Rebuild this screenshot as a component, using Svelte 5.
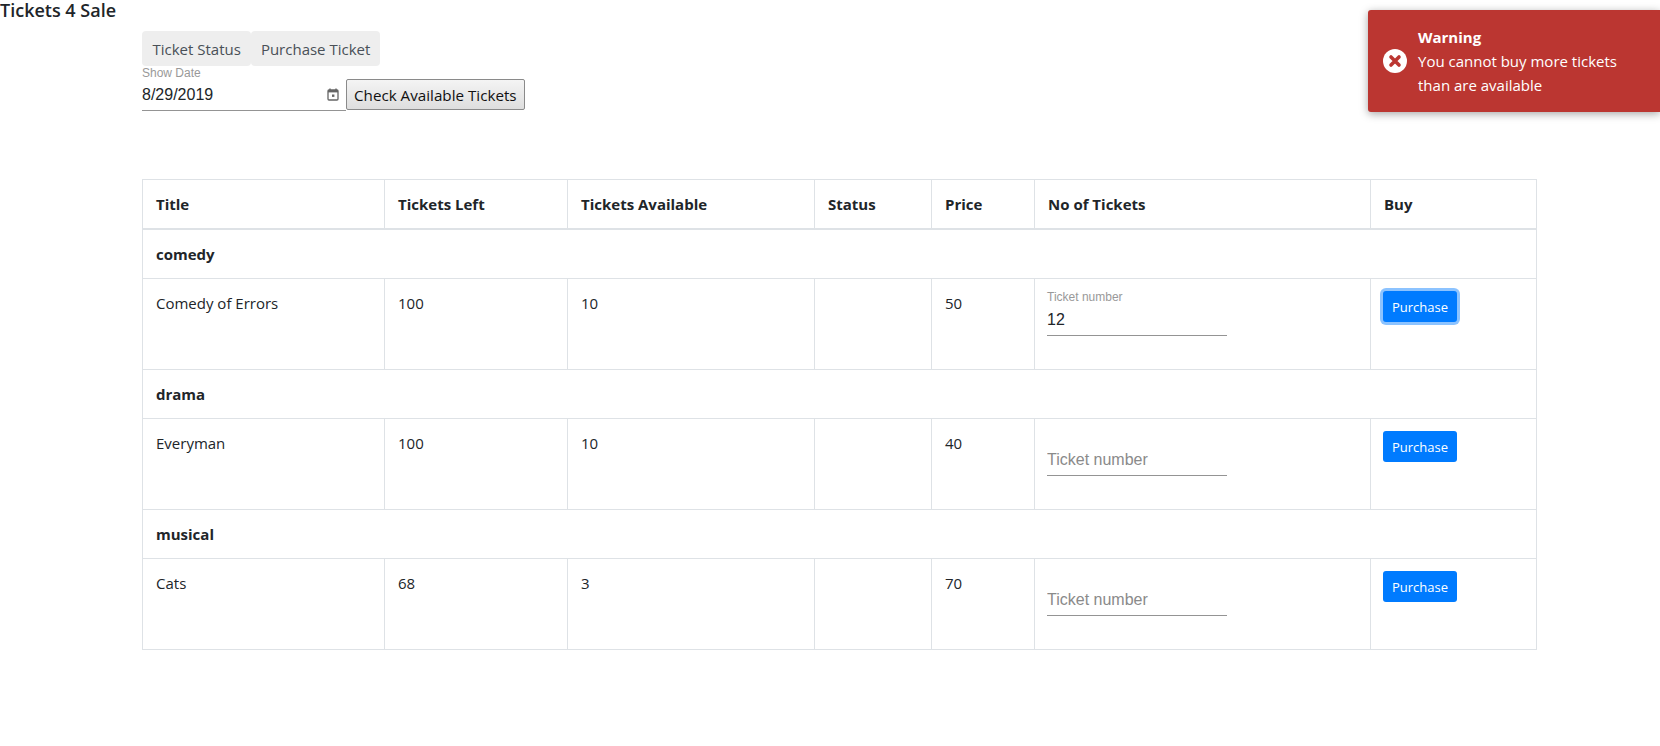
<script>
  const groups = [
    { name: "comedy", title: "Comedy of Errors", left: 100, available: 10, price: 50, value: "12", focused: true },
    { name: "drama", title: "Everyman", left: 100, available: 10, price: 40, value: "" },
    { name: "musical", title: "Cats", left: 68, available: 3, price: 70, value: "" }
  ];
  const columns = [
    ["Title", 242], ["Tickets Left", 183], ["Tickets Available", 247], ["Status", 117],
    ["Price", 103], ["No of Tickets", 336], ["Buy", 166]
  ];
</script>

<h1 class="brand">Tickets 4 Sale</h1>

<main class="content">
  <nav class="tabs">
    <button class="tab">Ticket Status</button>
    <button class="tab">Purchase Ticket</button>
  </nav>

  <div class="date-row">
    <div class="field date-field">
      <span class="float-label">Show Date</span>
      <input class="line-input" value="8/29/2019" />
      <svg class="cal" viewBox="0 0 12 13" width="12" height="13" aria-hidden="true">
        <path d="M3 0.5v2M9 0.5v2" stroke="#666" stroke-width="1.4" fill="none" />
        <rect x="1" y="2" width="10" height="10" rx="1" stroke="#666" stroke-width="1.3" fill="none" />
        <rect x="1" y="2" width="10" height="2.4" fill="#666" />
        <rect x="5" y="6.5" width="2.4" height="2.4" fill="#666" />
      </svg>
    </div>
    <button class="check">Check Available Tickets</button>
  </div>

  <table>
    <colgroup>
      {#each columns as col}
        <col style="width: {col[1]}px" />
      {/each}
    </colgroup>
    <thead>
      <tr>
        {#each columns as col}
          <th>{col[0]}</th>
        {/each}
      </tr>
    </thead>
    <tbody>
      {#each groups as g}
        <tr class="group"><td colspan="7">{g.name}</td></tr>
        <tr class="item">
          <td>{g.title}</td>
          <td>{g.left}</td>
          <td>{g.available}</td>
          <td></td>
          <td>{g.price}</td>
          <td class="ticket-cell">
            <div class="field ticket-field">
              {#if g.value}
                <span class="float-label">Ticket number</span>
              {/if}
              <input class="line-input" value={g.value} placeholder="Ticket number" />
            </div>
          </td>
          <td class="buy-cell"><button class="purchase" class:focused={g.focused}>Purchase</button></td>
        </tr>
      {/each}
    </tbody>
  </table>
</main>

<aside class="toast">
  <svg class="toast-icon" viewBox="0 0 24 24" width="24" height="24" aria-hidden="true">
    <circle cx="12" cy="12" r="12" fill="#fff" />
    <path d="M8 8l8 8M16 8l-8 8" stroke="#bb3631" stroke-width="3.6" stroke-linecap="round" fill="none" />
  </svg>
  <div class="toast-text">
    <strong>Warning</strong>
    <p>You cannot buy more tickets than are available</p>
  </div>
</aside>

<style>
  :global(body) {
    font-family: "Open Sans", "Liberation Sans", sans-serif;
    font-size: 15px;
    color: #212529;
    background: #fff;
  }

  .brand {
    margin: 0;
    font-size: 18px;
    font-weight: 600;
    line-height: 21px;
    height: 31px;
  }

  .content {
    padding-left: 142px;
  }

  .tabs {
    display: flex;
    height: 35px;
  }

  .tab {
    font: inherit;
    font-size: 15px;
    color: #495057;
    background: #eee;
    border: 0;
    border-radius: 4px;
    padding: 0 10.5px;
  }

  .tab:last-child {
    padding: 0 9.5px;
  }

  .date-row {
    display: flex;
    align-items: flex-start;
    height: 113px;
  }

  .field {
    position: relative;
  }

  .date-field {
    width: 204px;
    height: 45px;
  }

  .float-label {
    position: absolute;
    left: 0;
    top: 0;
    font-family: "Liberation Sans", sans-serif;
    font-size: 12px;
    line-height: 14px;
    color: #999;
  }

  .line-input {
    display: block;
    width: 100%;
    box-sizing: border-box;
    border: 0;
    border-bottom: 1px solid #949494;
    outline: 0;
    padding: 0;
    background: transparent;
    font-family: "Liberation Sans", sans-serif;
    font-size: 16px;
    color: #212529;
  }

  .line-input::placeholder {
    color: #8a8a8a;
    opacity: 1;
  }

  .date-field .line-input {
    height: 45px;
    padding-top: 13px;
  }

  .cal {
    position: absolute;
    right: 7px;
    top: 22px;
  }

  .check {
    font: inherit;
    font-size: 15.2px;
    color: #111;
    height: 31px;
    margin-top: 13px;
    padding: 0 7px;
    border: 1px solid #8a8a8a;
    border-radius: 2px;
    background: linear-gradient(#f4f4f4, #dedede);
  }

  table {
    border-collapse: collapse;
    table-layout: fixed;
    width: 1394px;
  }

  th, td {
    border: 1px solid #dee2e6;
    padding: 13px 12px 12px 13px;
    text-align: left;
    vertical-align: top;
    line-height: 23px;
  }

  th {
    border-bottom-width: 2px;
    font-weight: 700;
    height: 49px;
    box-sizing: border-box;
  }

  .group td {
    font-weight: 700;
    height: 49px;
    box-sizing: border-box;
  }

  .item td {
    height: 91px;
    box-sizing: border-box;
  }

  .item td.ticket-cell {
    padding-top: 0;
    padding-left: 12px;
  }

  .item td.buy-cell {
    padding-left: 12px;
  }

  .ticket-field {
    width: 180px;
    height: 57px;
    margin-top: 0;
  }

  .ticket-field .float-label {
    top: 11px;
  }

  .ticket-field .line-input {
    height: 57px;
    padding-top: 26px;
  }

  .purchase {
    display: block;
    font: inherit;
    font-size: 13px;
    line-height: 20px;
    color: #fff;
    background: #007bff;
    border: 0;
    border-radius: 3px;
    width: 74px;
    height: 31px;
    margin-top: -1px;
    padding: 0;
  }

  .purchase.focused {
    box-shadow: 0 0 0 3px rgba(0, 123, 255, 0.45);
  }

  .toast {
    position: absolute;
    top: 10px;
    right: 0;
    width: 292px;
    height: 102px;
    box-sizing: border-box;
    display: flex;
    align-items: center;
    gap: 11px;
    padding: 0 40px 0 15px;
    color: #fff;
    background: #bb3631;
    border-radius: 3px 0 0 3px;
    box-shadow: 0 2px 8px rgba(0, 0, 0, 0.35);
    font-size: 15px;
    line-height: 24px;
  }

  .toast-icon {
    flex: none;
  }

  .toast-text strong {
    display: block;
  }

  .toast-text p {
    margin: 0;
  }
</style>
